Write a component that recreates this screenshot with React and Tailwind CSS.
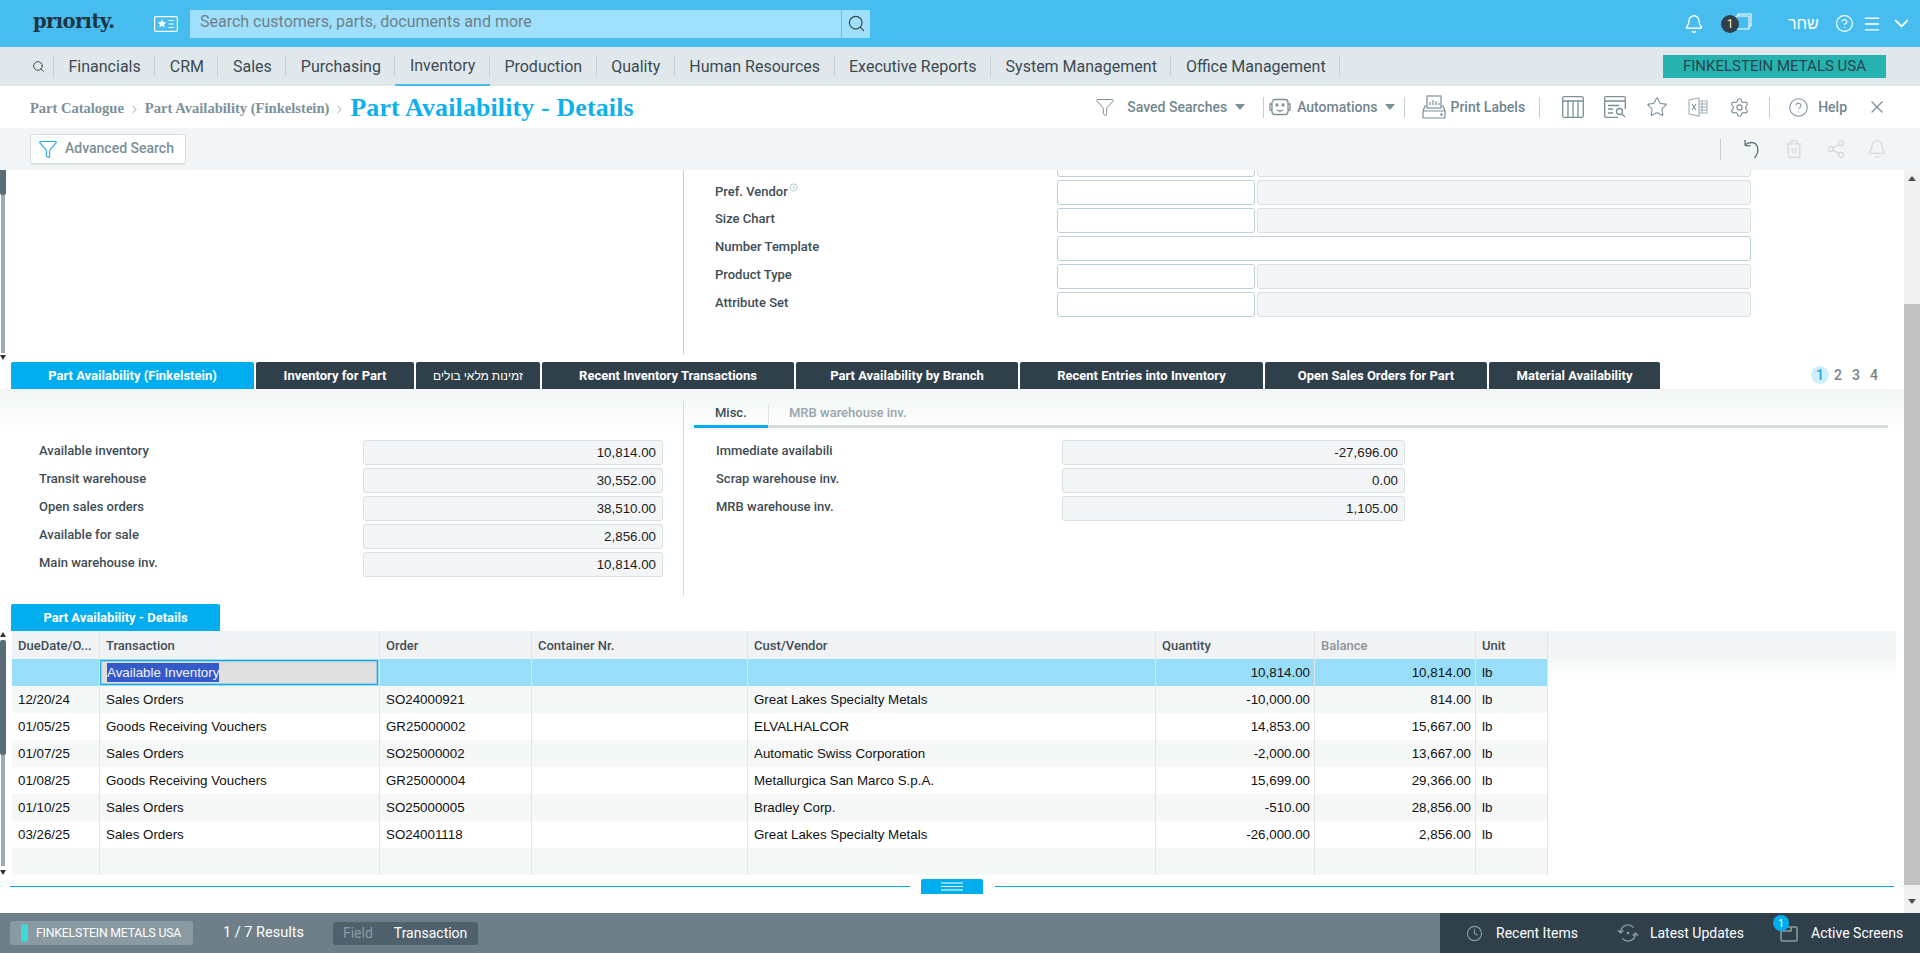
import { Bell, ChevronDown, ChevronRight, CircleHelp, Clock, Funnel, Menu, Search, Settings, Share2, Star, Trash2, X } from 'lucide-react';

const navItems = ['Financials', 'CRM', 'Sales', 'Purchasing', 'Inventory', 'Production', 'Quality', 'Human Resources', 'Executive Reports', 'System Management', 'Office Management'];

const tabs = [
  { label: 'Part Availability (Finkelstein)', width: 'w-[243px]', active: true },
  { label: 'Inventory for Part', width: 'w-[158px]' },
  { label: 'זמינות מלאי בולים', width: 'w-[124px]', hebrew: true },
  { label: 'Recent Inventory Transactions', width: 'w-[252px]' },
  { label: 'Part Availability by Branch', width: 'w-[222px]' },
  { label: 'Recent Entries into Inventory', width: 'w-[243px]' },
  { label: 'Open Sales Orders for Part', width: 'w-[222px]' },
  { label: 'Material Availability', width: 'w-[171px]' },
];

const leftFields = [
  ['Available inventory', '10,814.00'],
  ['Transit warehouse', '30,552.00'],
  ['Open sales orders', '38,510.00'],
  ['Available for sale', '2,856.00'],
  ['Main warehouse inv.', '10,814.00'],
];

const rightFields = [
  ['Immediate availabili', '-27,696.00'],
  ['Scrap warehouse inv.', '0.00'],
  ['MRB warehouse inv.', '1,105.00'],
];

const rows = [
  ['12/20/24', 'Sales Orders', 'SO24000921', 'Great Lakes Specialty Metals', '-10,000.00', '814.00'],
  ['01/05/25', 'Goods Receiving Vouchers', 'GR25000002', 'ELVALHALCOR', '14,853.00', '15,667.00'],
  ['01/07/25', 'Sales Orders', 'SO25000002', 'Automatic Swiss Corporation', '-2,000.00', '13,667.00'],
  ['01/08/25', 'Goods Receiving Vouchers', 'GR25000004', 'Metallurgica San Marco S.p.A.', '15,699.00', '29,366.00'],
  ['01/10/25', 'Sales Orders', 'SO25000005', 'Bradley Corp.', '-510.00', '28,856.00'],
  ['03/26/25', 'Sales Orders', 'SO24001118', 'Great Lakes Specialty Metals', '-26,000.00', '2,856.00'],
];

const gridCols = 'grid grid-cols-[88px_280px_152px_216px_408px_159px_161px_72px]';

function Cell({ children, right, className = '' }) {
  return (
    <div className={`h-full border-r border-[#e3e6e8] px-[6px] flex items-center truncate ${right ? 'justify-end pr-[4px]' : ''} ${className}`}>
      {children}
    </div>
  );
}

function Sep({ className = '' }) {
  return <div className={`w-px h-[21px] bg-[#c5ced3] ${className}`} />;
}

function Caret({ className = '' }) {
  return <div className={`w-0 h-0 border-x-[5px] border-x-transparent border-t-[6px] border-t-[#7b8f99] ${className}`} />;
}

function ValueBox({ value, className = '' }) {
  return (
    <div className={`h-[25px] rounded-[3px] border border-[#d6e0e5] bg-[#f3f5f7] flex items-center justify-end pr-[6px] font-['Liberation_Sans',Arial,sans-serif] text-[13.33px] text-[#1c1c1c] ${className}`}>
      {value}
    </div>
  );
}

function TopBar() {
  return (
    <div className="h-[47px] bg-[#47bdef] flex items-center shrink-0">
      <div className="w-[154px] pl-[33px] font-['DejaVu_Serif',serif] font-bold text-[19.5px] tracking-[-0.6px] text-[#1d3542] leading-none pb-[3px]">prıorıty.</div>
      <svg viewBox="0 0 24 16" className="w-[24px] h-[16px]" fill="none">
        <rect x="0.6" y="0.6" width="22.8" height="14.8" rx="1.5" stroke="#fff" strokeWidth="1.2" />
        <path d="M8 3.2l1.3 2.9 3 .3-2.3 2 .7 3-2.7-1.6-2.7 1.6.7-3-2.3-2 3-.3z" fill="#fff" />
        <path d="M14.5 4.5h5.5M14.5 8h5.5M14.5 11.500h5.500" stroke="#fff" strokeWidth="1" />
      </svg>
      <div className="ml-[12px] w-[651px] h-[28px] bg-[#9fe1fd] flex items-center pl-[10px] pb-[3px] text-[16px] text-[#6f7f87]">Search customers, parts, documents and more</div>
      <div className="w-[29px] h-[28px] bg-[#9fe1fd] border-l border-[#5fbfe8] flex items-center justify-center">
        <Search className="w-[19px] h-[19px] text-[#34474f]" strokeWidth={1.5} />
      </div>
      <div className="ml-auto flex items-center text-white pr-[7px]">
        <Bell className="w-[20px] h-[20px]" strokeWidth={1.7} />
        <div className="relative ml-[17px] w-[31px] h-[20px]">
          <svg viewBox="0 0 17 17" className="absolute left-[14px] -top-[1px] w-[17px] h-[17px]" fill="none" stroke="#fff" strokeWidth="1.1">
            <path d="M3 3V1h13v12h-2" />
            <rect x="1" y="3" width="13" height="13" rx="1" />
          </svg>
          <div className="absolute left-0 top-[1px] w-[18px] h-[18px] rounded-full bg-[#2f404b] text-[#ffe9a8] text-[12px] flex items-center justify-center">1</div>
        </div>
        <div className="ml-[36px] text-[16px] leading-none w-[30px]">שחר</div>
        <CircleHelp className="ml-[17px] w-[19px] h-[19px]" strokeWidth={1.5} />
        <Menu className="ml-[8px] w-[20px] h-[20px]" strokeWidth={1.7} />
        <ChevronDown className="ml-[8px] w-[23px] h-[23px]" strokeWidth={2} />
      </div>
    </div>
  );
}

function NavBar() {
  return (
    <div className="h-[39px] bg-[#e1e8ec] flex items-center shrink-0 text-[16px] text-[#3c4a52]">
      <div className="w-[54px] pl-[32px] h-[22px] flex items-center">
        <div className="border-r border-[#c9d2d7] w-[22px] h-full flex items-center">
          <Search className="w-[13px] h-[13px] text-[#3c4a52]" strokeWidth={1.8} />
        </div>
      </div>
      {navItems.map((item) => (
        <div key={item} className={`h-[39px] flex items-center px-[14.5px] relative ${item === 'Inventory' ? 'border-b-[2px] border-[#47bdef]' : ''}`}>
          <span>{item}</span>
          <div className="absolute right-0 top-[9px] w-px h-[21px] bg-[#c9d2d7]" />
        </div>
      ))}
      <div className="ml-auto mr-[34px] w-[223px] h-[23px] bg-[#26b3b0] flex items-center justify-center text-[#2a4450] text-[15px]">FINKELSTEIN METALS USA</div>
    </div>
  );
}

function TitleBar() {
  const iconClass = 'text-[#7b909b]';
  return (
    <div className="h-[42px] bg-white flex items-center shrink-0 pl-[30px] pr-[33px]">
      <div className="flex items-center font-['Liberation_Serif',serif] font-bold text-[#7d9099]">
        <span className="text-[14.5px] pt-[4px]">Part Catalogue</span>
        <ChevronRight className="w-[13px] h-[13px] mx-[4px] mt-[4px]" strokeWidth={1.5} />
        <span className="text-[14.6px] pt-[4px]">Part Availability (Finkelstein)</span>
        <ChevronRight className="w-[13px] h-[13px] mx-[4px] mt-[4px]" strokeWidth={1.5} />
        <span className="text-[25.9px] tracking-[0.15px] leading-none text-[#0fb0ec] pt-[1px]">Part Availability - Details</span>
      </div>
      <div className="ml-auto flex items-center text-[14px] font-medium text-[#71868f]">
        <Funnel className={`w-[20px] h-[20px] ${iconClass}`} strokeWidth={1.2} />
        <span className="ml-[12px]">Saved Searches</span>
        <Caret className="ml-[8px]" />
        <Sep className="ml-[18px]" />
        <svg viewBox="0 0 22 18" className="ml-[5px] w-[22px] h-[18px]" fill="none" stroke="#7b8f99" strokeWidth="1.3">
          <rect x="3" y="1.500" width="16" height="15" rx="3" />
          <path d="M3 6H1v6h2M19 6h2v6h-2M8 12c1.500 1.300 4.500 1.300 6 0" />
          <circle cx="8" cy="7" r="1" />
          <circle cx="14" cy="7" r="1" />
        </svg>
        <span className="ml-[6px]">Automations</span>
        <Caret className="ml-[8px]" />
        <Sep className="ml-[9px]" />
        <svg viewBox="0 0 24 24" className="ml-[17px] w-[24px] h-[24px]" fill="none" stroke="#7b8f99" strokeWidth="1.2">
          <rect x="5" y="1" width="14" height="12" />
          <path d="M8 10V7M11 10V5M14 10V6M17 10V8" />
          <path d="M5 11H3l-2 5v6a1 1 0 0 0 1 1h20a1 1 0 0 0 1-1v-6l-2-5h-2M1 16h22" />
          <circle cx="19.500" cy="19.500" r="0.7" fill="#7b8f99" />
        </svg>
        <span className="ml-[4px]">Print Labels</span>
        <Sep className="ml-[14px]" />
        <svg viewBox="0 0 22 22" className="ml-[22px] w-[22px] h-[22px]" fill="none" stroke="#7b8f99" strokeWidth="1.3">
          <rect x="0.700" y="0.700" width="20.600" height="20.600" rx="1.500" />
          <path d="M0.700 5h20.600M6 5v16.300M11 5v16.300M16 5v16.300" />
        </svg>
        <svg viewBox="0 0 22 22" className="ml-[20px] w-[22px] h-[22px]" fill="none" stroke="#7b8f99" strokeWidth="1.3">
          <path d="M14 21.300H2a1.300 1.300 0 0 1-1.300-1.300V2A1.300 1.300 0 0 1 2 .7h18A1.300 1.300 0 0 1 21.300 2v11" />
          <path d="M.7 5h20.600M4 9.500h11M4 13h5M4 17h5" />
          <circle cx="15.500" cy="15.500" r="3" />
          <path d="M18 18l3 3" />
        </svg>
        <Star className={`ml-[20px] w-[22px] h-[22px] ${iconClass}`} strokeWidth={1.2} />
        <svg viewBox="0 0 20 20" className="ml-[20px] w-[20px] h-[20px]" fill="none" stroke="#9fb0b9" strokeWidth="1.1">
          <path d="M11 1L1 3v14l10 2zM11 4h8v12h-8M14 4v12M11 7h8M11 10h8M11 13h8" />
          <path d="M4 7l4 6M8 7l-4 6" stroke="#7b8f99" />
        </svg>
        <Settings className={`ml-[21px] w-[21px] h-[21px] ${iconClass}`} strokeWidth={1.3} />
        <Sep className="ml-[19px]" />
        <CircleHelp className={`ml-[18px] w-[21px] h-[21px] ${iconClass}`} strokeWidth={1.2} />
        <span className="ml-[9px]">Help</span>
        <X className={`ml-[20px] w-[20px] h-[20px] ${iconClass}`} strokeWidth={1.5} />
      </div>
    </div>
  );
}

function ActionBar() {
  return (
    <div className="h-[42px] bg-[#f2f5f6] flex items-center shrink-0 pl-[30px] pr-[33px]">
      <div className="w-[156px] h-[30px] bg-white border border-[#d5dde1] rounded-[3px] flex items-center pl-[7px] pb-[1px] text-[14px] font-medium text-[#7b8f99] shadow-[0_1px_1px_rgba(0,0,0,0.06)]">
        <Funnel className="w-[20px] h-[20px] text-[#1ba9e6]" strokeWidth={1.3} />
        <span className="ml-[7px]">Advanced Search</span>
      </div>
      <div className="ml-auto flex items-center">
        <Sep className="h-[21px] bg-[#9aa8b0]" />
        <svg viewBox="0 0 22 22" className="ml-[20px] w-[22px] h-[22px]" fill="none" stroke="#5d6f79" strokeWidth="1.300">
          <path d="M4 7c5-4 11-3 12.500 2 1 4-.5 8-3 11" />
          <path d="M4 2l.2 5.300 5.300.5" />
        </svg>
        <Trash2 className="ml-[21px] w-[20px] h-[20px] text-[#ccd5d9]" strokeWidth={1.3} />
        <Share2 className="ml-[22px] w-[20px] h-[20px] text-[#ccd5d9]" strokeWidth={1.3} />
        <Bell className="ml-[21px] w-[20px] h-[20px] text-[#ccd5d9]" strokeWidth={1.3} />
      </div>
    </div>
  );
}

function FormSection() {
  const formRows = [
    { label: '', clip: true },
    { label: 'Pref. Vendor', info: true },
    { label: 'Size Chart' },
    { label: 'Number Template', wide: true },
    { label: 'Product Type' },
    { label: 'Attribute Set' },
  ];
  return (
    <div className="h-[192px] flex overflow-hidden shrink-0 bg-white">
      <div className="w-[6px] flex flex-col items-start shrink-0">
        <div className="w-[6px] h-[25px] bg-[#5b6c76] rounded-b-[2px]" />
        <div className="ml-[1px] w-[4px] h-[158px] bg-[#9eabb3]" />
        <div className="mt-[2px] w-0 h-0 border-x-[3px] border-x-transparent border-t-[5px] border-t-[#333]" />
      </div>
      <div className="w-[678px] h-[184px] border-r border-[#c8ced2] shrink-0" />
      <div className="-mt-[18px] flex flex-col gap-[3px] pl-[31px]">
        {formRows.map((row, i) => (
          <div key={i} className="h-[25px] flex items-center">
            <div className={`w-[342px] text-[13px] font-medium text-[#404d55] flex items-start ${row.info ? 'pb-[1px]' : 'pb-[4px]'}`}>
              {row.label}
              {row.info && (
                <svg viewBox="0 0 10 10" className="w-[9px] h-[9px] mt-[1px] ml-[1px]" fill="none" stroke="#b6c3ca" strokeWidth="1"><circle cx="5" cy="5" r="4" /><path d="M5 3v2.500l1.500 1" /></svg>
              )}
            </div>
            {row.wide ? (
              <div className="w-[694px] h-[25px] rounded-[3px] border border-[#bccfd8] bg-white" />
            ) : (
              <>
                <div className="w-[198px] h-[25px] rounded-[3px] border border-[#bccfd8] bg-white" />
                <div className="ml-[2px] w-[494px] h-[25px] rounded-[3px] border border-[#d6e0e5] bg-[#f3f5f7]" />
              </>
            )}
          </div>
        ))}
      </div>
    </div>
  );
}

function TabStrip() {
  return (
    <div className="h-[27px] flex pl-[11px] shrink-0 bg-white">
      <div className="flex gap-[2px]">
        {tabs.map((tab) => (
          <div key={tab.label} className={`${tab.width} h-[27px] rounded-t-[2px] flex items-center justify-center text-white whitespace-nowrap ${tab.hebrew ? 'text-[12px] font-normal' : 'text-[13px] font-bold'} ${tab.active ? 'bg-[#00aeef]' : 'bg-[#2f404b]'}`}>
            {tab.label}
          </div>
        ))}
      </div>
      <div className="ml-auto pr-[21px] pt-[4px] flex text-[14px] font-medium text-[#7a7f83]">
        {[1, 2, 3, 4].map((n) => (
          <div key={n} className={`w-[18px] h-[18px] rounded-full flex items-center justify-center ${n === 1 ? 'bg-[#d0effc] text-[#1ba9e0]' : ''}`}>{n}</div>
        ))}
      </div>
    </div>
  );
}

function FieldsSection() {
  return (
    <div className="h-[215px] flex shrink-0 bg-[linear-gradient(#f3f5f6,#ffffff_46px)]">
      <div className="w-[684px] mt-[12px] h-[195px] border-r border-[#d5dadd] pt-[39px] shrink-0 flex flex-col gap-[3px]">
        {leftFields.map(([label, value]) => (
          <div key={label} className="h-[25px] flex items-center">
            <div className="w-[363px] pl-[39px] pb-[3px] text-[13px] font-medium text-[#404d55]">{label}</div>
            <ValueBox value={value} className="w-[300px]" />
          </div>
        ))}
      </div>
      <div className="pl-[10px] w-[1204px]">
        <div className="mt-[15px] flex h-[24px] border-b-[3px] border-[#d5dadc] text-[13px] font-medium">
          <div className="w-[74px] h-[24px] border-b-[3px] border-[#00aeef] pl-[21px] pb-[4px] flex items-center text-[#404d55]">Misc.</div>
          <div className="w-px h-[20px] bg-[#e0e4e6]" />
          <div className="pl-[20px] pb-[3px] flex items-center text-[#98a5ac]">MRB warehouse inv.</div>
        </div>
        <div className="mt-[12px] flex flex-col gap-[3px]">
          {rightFields.map(([label, value]) => (
            <div key={label} className="h-[25px] flex items-center">
              <div className="w-[368px] pl-[22px] pb-[3px] text-[13px] font-medium text-[#404d55]">{label}</div>
              <ValueBox value={value} className="w-[343px]" />
            </div>
          ))}
        </div>
      </div>
    </div>
  );
}

function DetailsTable() {
  const headers = ['DueDate/O...', 'Transaction', 'Order', 'Container Nr.', 'Cust/Vendor', 'Quantity', 'Balance', 'Unit'];
  return (
    <>
      <div className="h-[27px] pl-[11px] shrink-0 bg-white">
        <div className="w-[209px] h-[27px] rounded-t-[2px] bg-[#00aeef] flex items-center justify-center text-white text-[13px] font-bold">Part Availability - Details</div>
      </div>
      <div className="h-[244px] flex shrink-0 bg-white">
        <div className="w-[12px] shrink-0 flex flex-col items-start">
          <div className="mt-[1px] w-0 h-0 border-x-[3px] border-x-transparent border-b-[5px] border-b-[#333]" />
          <div className="mt-[3px] w-[6px] h-[115px] bg-[#5b6c76] rounded-[2px]" />
          <div className="ml-[1px] w-[4px] h-[111px] bg-[#9eabb3]" />
          <div className="mt-[4px] w-0 h-0 border-x-[3px] border-x-transparent border-t-[5px] border-t-[#333]" />
        </div>
        <div className="w-[1536px] shrink-0 font-['Liberation_Sans',Arial,sans-serif] text-[13.33px] text-[#111]">
          <div className={`${gridCols} h-[28px] bg-[#f0f2f4] font-['Roboto',sans-serif] text-[13px] font-medium text-[#404d55]`}>
            {headers.map((h) => (
              <Cell key={h} className={`border-[#ced2d5] pt-[1px] ${h === 'Balance' ? 'text-[#8a9499]' : ''}`}>{h}</Cell>
            ))}
          </div>
          <div className={`${gridCols} h-[27px] bg-[#98def9]`}>
            <Cell />
            <div className="h-full border-r border-[#e3e6e8] flex items-center py-[1px] pr-[1px]">
              <div className="w-full h-[25px] bg-[#e0e0e0] border border-[#1aa9e5] shadow-[inset_0_0_0_1px_rgba(26,169,229,0.35)] flex items-center pl-[6px]">
                <span className="bg-[#3459c8] text-[#f2f4ff]">Available Inventory</span>
              </div>
            </div>
            <Cell />
            <Cell />
            <Cell />
            <Cell right>10,814.00</Cell>
            <Cell right>10,814.00</Cell>
            <Cell>lb</Cell>
          </div>
          {rows.map((row, i) => (
            <div key={i} className={`${gridCols} h-[27px] ${i % 2 === 0 ? 'bg-[#f6f7f7]' : 'bg-white'}`}>
              <Cell>{row[0]}</Cell>
              <Cell>{row[1]}</Cell>
              <Cell>{row[2]}</Cell>
              <Cell />
              <Cell>{row[3]}</Cell>
              <Cell right>{row[4]}</Cell>
              <Cell right>{row[5]}</Cell>
              <Cell>lb</Cell>
            </div>
          ))}
          <div className={`${gridCols} h-[27px] bg-[#f6f7f7]`}>
            {headers.map((h) => <Cell key={h} />)}
          </div>
        </div>
        <div className="w-[348px] h-[51px] bg-[linear-gradient(#f2f5f6_45%,#ffffff)] shrink-0" />
      </div>
    </>
  );
}

function Splitter() {
  return (
    <div className="h-[38px] pt-[4px] pl-[10px] bg-white shrink-0">
      <div className="h-[15px] flex items-center">
        <div className="w-[900px] h-px bg-[#00aeef]" />
        <div className="ml-[11px] w-[62px] h-[15px] rounded-t-[2px] bg-[#00aeef] flex items-center justify-center">
          <svg viewBox="0 0 22 9" className="w-[22px] h-[9px]" stroke="#fff" strokeWidth="1.200"><path d="M0 1h22M0 4.500h22M0 8h22" /></svg>
        </div>
        <div className="ml-[12px] w-[899px] h-px bg-[#00aeef]" />
      </div>
    </div>
  );
}

function Footer() {
  return (
    <div className="h-[40px] bg-[#6e7f89] flex items-center shrink-0 text-white">
      <div className="ml-[10px] w-[183px] h-[24px] rounded-[3px] bg-[#8a9aa2] flex items-center pl-[11px] text-[12.25px]">
        <div className="w-[7px] h-[18px] rounded-[3px] bg-[#3fdad6]" />
        <span className="ml-[8px] tracking-[-0.2px]">FINKELSTEIN METALS USA</span>
      </div>
      <div className="ml-[30px] text-[14.5px]">1 / 7 Results</div>
      <div className="ml-[29px] w-[145px] h-[23px] rounded-[3px] bg-[#4f616c] flex items-center pl-[10px] text-[14px]">
        <span className="text-[#8d9ca4]">Field</span>
        <span className="ml-[21px]">Transaction</span>
      </div>
      <div className="ml-auto w-[480px] h-[40px] bg-[#2f404b] flex items-center text-[14px]">
        <Clock className="ml-[26px] w-[17px] h-[17px] text-[#8a9aa2]" strokeWidth={1.6} />
        <span className="ml-[13px]">Recent Items</span>
        <svg viewBox="0 0 24 24" className="ml-[39px] w-[22px] h-[22px]" fill="none" stroke="#8a9aa2" strokeWidth="1.500">
          <path d="M4 11a8 8 0 0 1 14-5M20 13a8 8 0 0 1-14 5" />
          <path d="M1 9l3 3 3-3M17 15l3-3 3 3" />
          <circle cx="12" cy="12" r="1.500" fill="#8a9aa2" stroke="none" />
        </svg>
        <span className="ml-[11px]">Latest Updates</span>
        <div className="relative ml-[36px] w-[18px] h-[18px]">
          <svg viewBox="0 0 18 18" className="w-[18px] h-[18px]" fill="none" stroke="#8a9aa2" strokeWidth="1.500">
            <rect x="1" y="3" width="16" height="14" rx="1" />
            <path d="M1 7h10V3" />
          </svg>
          <div className="absolute -left-[7px] -top-[9px] w-[16px] h-[16px] rounded-full bg-[#00aeef] text-[10px] flex items-center justify-center">1</div>
        </div>
        <span className="ml-[13px]">Active Screens</span>
      </div>
    </div>
  );
}

function RightScrollbar() {
  return (
    <div className="w-[16px] bg-[#f1f1f1] flex flex-col items-center shrink-0">
      <div className="mt-[6px] w-0 h-0 border-x-[4px] border-x-transparent border-b-[5px] border-b-[#505050]" />
      <div className="mt-[123px] w-[16px] h-[581px] bg-[#c1c1c1]" />
      <div className="mt-[14px] w-0 h-0 border-x-[4px] border-x-transparent border-t-[5px] border-t-[#505050]" />
    </div>
  );
}

export default function App() {
  return (
    <div className="w-[1920px] h-[953px] flex flex-col overflow-hidden bg-white font-[Roboto,'Liberation_Sans',sans-serif]">
      <TopBar />
      <NavBar />
      <TitleBar />
      <ActionBar />
      <div className="flex h-[743px] shrink-0">
        <div className="w-[1904px] flex flex-col">
          <FormSection />
          <TabStrip />
          <FieldsSection />
          <DetailsTable />
          <Splitter />
        </div>
        <RightScrollbar />
      </div>
      <Footer />
    </div>
  );
}
